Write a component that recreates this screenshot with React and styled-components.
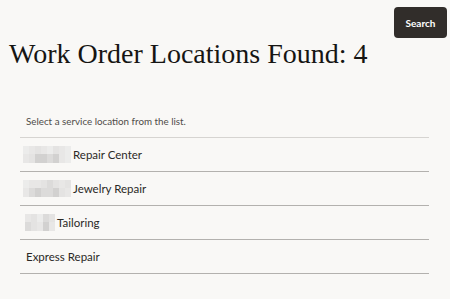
import React from "react";
import styled, { createGlobalStyle } from "styled-components";

const GlobalStyle = createGlobalStyle`
  html, body {
    margin: 0;
    padding: 0;
    background: #f9f8f6;
  }
  body {
    font-family: "Lato", "Noto Sans", sans-serif;
    color: #161513;
  }
`;

const Page = styled.div`
  width: 450px;
  height: 299px;
  overflow: hidden;
  background: #f9f8f6;
`;

const Toolbar = styled.div`
  display: flex;
  justify-content: flex-end;
  padding: 7px 3px 0 0;
`;

const SearchButton = styled.button`
  width: 53px;
  height: 31px;
  border: none;
  border-radius: 4px;
  background: #312d2a;
  color: #ffffff;
  font-family: "Lato", "Noto Sans", sans-serif;
  font-size: 10px;
  font-weight: 700;
  padding: 0;
  cursor: pointer;
`;

const Heading = styled.h1`
  margin: 0 0 0 9px;
  font-family: "Liberation Serif", "DejaVu Serif", serif;
  font-weight: 400;
  font-size: 28px;
  line-height: 31px;
  color: #161513;
`;

const ListPanel = styled.div`
  margin: 46px 21px 0 20px;
`;

const Hint = styled.div`
  padding: 0 0 10px 6px;
  font-size: 9.8px;
  color: #4f4c49;
  border-bottom: 1px solid #d6d4d1;
`;

const Row = styled.div`
  display: flex;
  align-items: center;
  height: 33px;
  padding-left: ${(p) => p.$indent}px;
  border-bottom: 1px solid #b3b1ae;
  font-size: 11.5px;
  color: #2b2926;
`;

const Redaction = styled.div`
  display: grid;
  grid-template-columns: repeat(${(p) => p.$cols}, 6px);
  grid-template-rows: 8px 9px;
  margin-right: 2px;
`;

const Cell = styled.span`
  background: ${(p) => p.$tone};
`;

const tones = ["#ececeb", "#e4e3e2", "#dcdbda", "#d2d1d0", "#e8e7e6", "#cfcecd"];

const locations = [
  { name: "Repair Center", cols: 8, indent: 3, seed: [0, 4, 1, 4, 0, 1, 4, 0, 4, 1, 3, 3, 2, 3, 4, 0] },
  { name: "Jewelry Repair", cols: 8, indent: 3, seed: [0, 4, 4, 1, 2, 1, 4, 1, 4, 2, 3, 2, 2, 3, 1, 4] },
  { name: "Tailoring", cols: 5, indent: 5, seed: [4, 1, 0, 2, 1, 2, 1, 4, 3, 4] },
  { name: "Express Repair", cols: 0, indent: 6, seed: [] },
];

export default function App() {
  return (
    <Page>
      <GlobalStyle />
      <Toolbar>
        <SearchButton>Search</SearchButton>
      </Toolbar>
      <Heading>Work Order Locations Found: 4</Heading>
      <ListPanel>
        <Hint>Select a service location from the list.</Hint>
        {locations.map((loc) => (
          <Row key={loc.name} $indent={loc.indent}>
            {loc.cols > 0 && (
              <Redaction $cols={loc.cols}>
                {loc.seed.map((t, i) => (
                  <Cell key={i} $tone={tones[t]} />
                ))}
              </Redaction>
            )}
            {loc.name}
          </Row>
        ))}
      </ListPanel>
    </Page>
  );
}
